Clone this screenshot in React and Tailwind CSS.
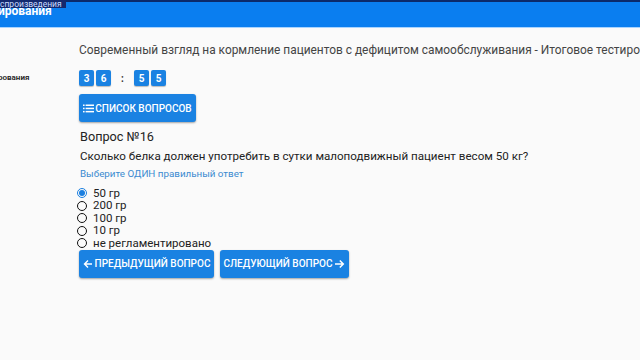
import React from "react";

function ListIcon() {
  return (
    <svg width="11" height="9" viewBox="0 0 11 9" className="mr-[1px]">
      <rect x="0" y="0.5" width="1.6" height="1.5" fill="white" />
      <rect x="0" y="3.7" width="1.6" height="1.5" fill="white" />
      <rect x="0" y="6.9" width="1.6" height="1.5" fill="white" />
      <rect x="2.6" y="0.5" width="8.4" height="1.5" fill="white" />
      <rect x="2.6" y="3.7" width="8.4" height="1.5" fill="white" />
      <rect x="2.6" y="6.9" width="8.4" height="1.5" fill="white" />
    </svg>
  );
}

function ArrowLeft() {
  return (
    <svg width="10" height="10" viewBox="0 0 10 10" className="mr-[2px]">
      <path d="M9 5H1.8M5 1.5L1.5 5L5 8.5" stroke="white" strokeWidth="1.4" fill="none" />
    </svg>
  );
}

function ArrowRight() {
  return (
    <svg width="11" height="10" viewBox="0 0 11 10" className="ml-[2px]">
      <path d="M1 5H9M5.8 1.5L9.3 5L5.8 8.5" stroke="white" strokeWidth="1.5" fill="none" />
    </svg>
  );
}

function Radio({ checked, label }) {
  return (
    <div className="flex items-center h-[12.5px]">
      {checked ? (
        <span className="w-[10px] h-[10px] rounded-full border border-[#1a7fe0] flex items-center justify-center mr-[6px] ml-[-2px]">
          <span className="w-[6px] h-[6px] rounded-full bg-[#1a7fe0]" />
        </span>
      ) : (
        <span className="w-[10px] h-[10px] rounded-full border-[1.5px] border-[#111] mr-[6px] ml-[-2px]" />
      )}
      <span className="text-[11.5px] text-[#222] leading-none">{label}</span>
    </div>
  );
}

export default function App() {
  const boxes = "w-[15px] h-[16px] rounded-[2px] bg-[#1a82e2] text-white text-[10px] font-bold flex items-center justify-center shadow-[0_1px_1px_rgba(0,0,0,0.25)]";
  const btn = "h-[28px] rounded-[3px] bg-[#1a82e2] text-white text-[10px] font-medium flex items-center justify-center shadow-[0_1px_2px_rgba(0,0,0,0.35)] whitespace-nowrap";
  return (
    <div className="w-[640px] h-[360px] overflow-hidden bg-[#fafafa] relative" style={{ fontFamily: "Roboto, 'Noto Sans', sans-serif" }}>
      <div className="h-[2px] bg-[#0b2a6b]" />
      <div className="h-[26px] bg-[#0a7ef0] border-b border-[#a9d4ff] flex items-start">
        <span className="text-white font-bold text-[12px] ml-[-2px] mt-[3px] leading-none">ирования</span>
      </div>
      <div className="absolute left-0 top-0 w-[66px] bg-[#14296e] text-[8.5px] leading-[8px] text-[#c9dcff] whitespace-nowrap overflow-hidden">спроизведения</div>

      <div className="flex">
        <div className="w-[79px] shrink-0 overflow-hidden">
          <div className="mt-[44px] ml-[-2px] text-[8px] font-semibold text-[#222] whitespace-nowrap">рования</div>
        </div>
        <div className="flex-1 min-w-0">
          <div className="mt-[14px] text-[11.9px] text-[#444] whitespace-nowrap leading-[16px]">
            Современный взгляд на кормление пациентов с дефицитом самообслуживания - Итоговое тестирование
          </div>
          <div className="flex items-center mt-[12px] gap-[2px]">
            <div className={boxes}>3</div>
            <div className={boxes}>6</div>
            <div className="w-[19px] text-center text-[10px] font-bold text-[#333]">:</div>
            <div className={boxes}>5</div>
            <div className={boxes}>5</div>
          </div>
          <div className={btn + " w-[117px] mt-[8px]"}>
            <ListIcon />
            СПИСОК ВОПРОСОВ
          </div>
          <div className="mt-[7px] ml-[1px] text-[12.7px] text-[#222] leading-[16px]">Вопрос №16</div>
          <div className="mt-[3px] ml-[1px] text-[11.6px] text-[#222] leading-[16px]">
            Сколько белка должен употребить в сутки малоподвижный пациент весом 50 кг?
          </div>
          <div className="mt-[3px] ml-[1px] text-[9.8px] text-[#3a8ad0] leading-[14px]">Выберите ОДИН правильный ответ</div>
          <div className="mt-[6px]">
            <Radio checked label="50 гр" />
            <Radio label="200 гр" />
            <Radio label="100 гр" />
            <Radio label="10 гр" />
            <Radio label="не регламентировано" />
          </div>
          <div className="flex gap-[6px] mt-[0px] pb-[4px]">
            <div className={btn + " w-[135px]"}><ArrowLeft />ПРЕДЫДУЩИЙ ВОПРОС</div>
            <div className={btn + " w-[129px]"}>СЛЕДУЮЩИЙ ВОПРОС<ArrowRight /></div>
          </div>
        </div>
      </div>
    </div>
  );
}
